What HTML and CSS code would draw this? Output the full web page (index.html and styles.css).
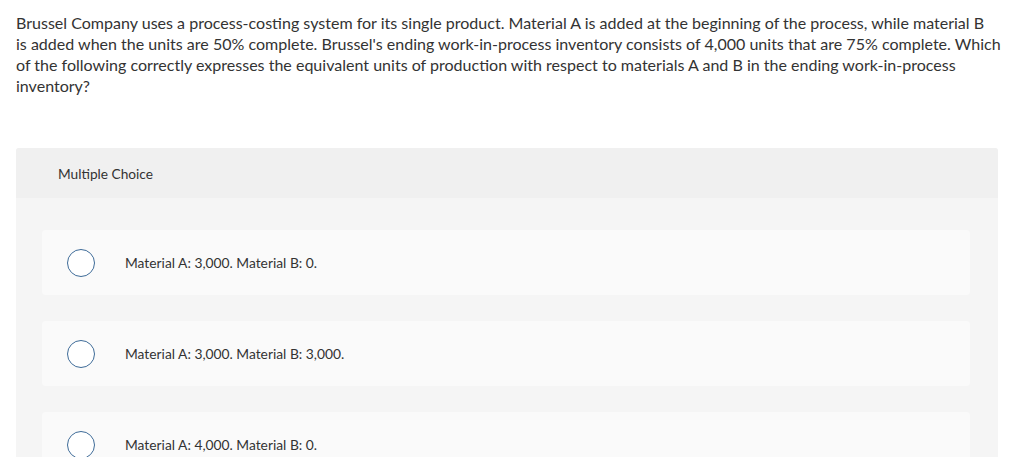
FILE: index.html
```html
<!DOCTYPE html>
<html>
<head>
<meta charset="utf-8">
<link rel="stylesheet" href="styles.css">
</head>
<body>
<div class="page">
  <p class="question">Brussel Company uses a process-costing system for its single product. Material A is added at the beginning of the process, while material B<br>is added when the units are 50% complete. Brussel's ending work-in-process inventory consists of 4,000 units that are 75% complete. Which<br>of the following correctly expresses the equivalent units of production with respect to materials A and B in the ending work-in-process<br>inventory?</p>
  <div class="panel">
    <div class="panel-head">Multiple Choice</div>
    <div class="panel-body">
      <div class="option"><span class="radio"></span><span class="label">Material A: 3,000. Material B: 0.</span></div>
      <div class="option"><span class="radio"></span><span class="label">Material A: 3,000. Material B: 3,000.</span></div>
      <div class="option"><span class="radio"></span><span class="label">Material A: 4,000. Material B: 0.</span></div>
    </div>
  </div>
</div>
</body>
</html>
```
FILE: styles.css
```css
html, body {
  margin: 0;
  padding: 0;
  background: #fff;
  overflow: hidden;
  height: 457px;
}
body {
  font-family: "Lato", "Open Sans", sans-serif;
  color: #333;
}
.page {
  padding: 12px 0 0 16px;
}
.question {
  margin: 0;
  font-size: 16.05px;
  line-height: 21px;
  white-space: nowrap;
}
.panel {
  margin-top: 52px;
  width: 982px;
  border-radius: 3px;
  overflow: hidden;
  background: #f5f5f5;
}
.panel-head {
  height: 50px;
  background: #f0f0f0;
  display: flex;
  align-items: center;
  padding-left: 42px;
  font-size: 13.7px;
  color: #333;
}
.panel-body {
  padding: 32px 28px 20px 26px;
  display: flex;
  flex-direction: column;
  gap: 26px;
}
.option {
  height: 65px;
  background: #fafafa;
  border-radius: 4px;
  display: flex;
  align-items: center;
  padding-left: 25px;
}
.radio {
  width: 26px;
  height: 26px;
  border: 1.5px solid #3e6b98;
  border-radius: 50%;
  background: #fff;
  flex: none;
}
.label {
  margin-left: 30px;
  font-size: 13.8px;
  color: #333;
}
```
